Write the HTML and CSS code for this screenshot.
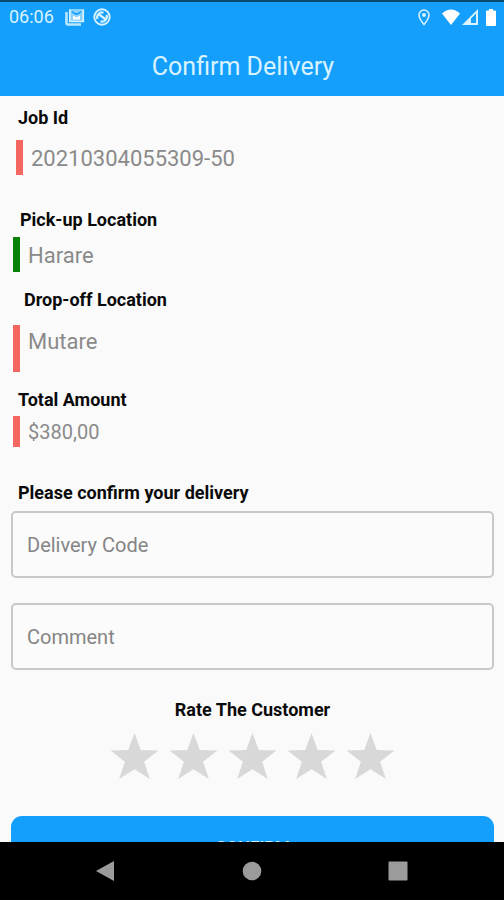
FILE: index.html
```html
<!DOCTYPE html>
<html lang="en">
<head>
<meta charset="utf-8">
<meta name="viewport" content="width=device-width, initial-scale=1">
<title>Confirm Delivery</title>
<link rel="stylesheet" href="styles.css">
</head>
<body>
<header class="header">
  <div class="status">
    <time class="clock">06:06</time>
    <svg class="icon icon-news" viewBox="0 0 20 18" aria-hidden="true">
      <path d="M1.500 4v11q0 1.500 1.500 1.500H16" fill="none" stroke="currentColor" stroke-width="2.600" opacity=".85"/>
      <rect x="4" y="1" width="15" height="13" rx="1" fill="currentColor" opacity=".6"/>
      <path d="M4.800 1.500v12h13.500v-12" fill="none" stroke="currentColor" stroke-width="1.600"/>
      <path d="M7 3.500q4.500 5 9 0" fill="none" stroke="#159ffc" stroke-width="1.800"/>
      <path d="M8 7.500l3.500 2 3.500-2v4H8z" fill="#fff"/>
    </svg>
    <svg class="icon icon-sync" viewBox="0 0 18 18" aria-hidden="true">
      <circle cx="9" cy="9" r="7.700" fill="none" stroke="currentColor" stroke-width="1.900"/>
      <path d="M4.500 11a4.800 4.800 0 0 1 6-6.300M13.500 7a4.800 4.800 0 0 1-6 6.300M6 6.500l7 5" fill="none" stroke="currentColor" stroke-width="2.200"/>
    </svg>
    <span class="spacer"></span>
    <svg class="icon icon-pin" viewBox="0 0 12 17" aria-hidden="true">
      <path d="M6 1a5 5 0 0 0-5 5c0 3.500 5 9.500 5 9.500S11 9.500 11 6a5 5 0 0 0-5-5z" fill="none" stroke="currentColor" stroke-width="1.500"/>
      <circle cx="6" cy="6" r="2" fill="currentColor"/>
    </svg>
    <svg class="icon icon-wifi" viewBox="0 0 18 16" aria-hidden="true">
      <path d="M0 4.500Q9-3.500 18 4.500L9 16z" fill="currentColor"/>
    </svg>
    <svg class="icon icon-signal" viewBox="0 0 16 16" aria-hidden="true">
      <path fill-rule="evenodd" d="M0 16L16 0v16zM9 9.500V14h5V4.500z" fill="currentColor"/>
    </svg>
    <svg class="icon icon-battery" viewBox="0 0 10 17" aria-hidden="true">
      <path d="M3 0h4v1.500h2q1 0 1 1V16q0 1-1 1H1q-1 0-1-1V2.500q0-1 1-1h2z" fill="currentColor"/>
    </svg>
  </div>
  <h1 class="title">Confirm Delivery</h1>
</header>
<main class="content">
  <section class="field field-job">
    <h2 class="label">Job Id</h2>
    <p class="value">20210304055309-50</p>
  </section>
  <section class="field field-pickup">
    <h2 class="label">Pick-up Location</h2>
    <p class="value">Harare</p>
  </section>
  <section class="field field-dropoff">
    <h2 class="label">Drop-off Location</h2>
    <p class="value">Mutare</p>
  </section>
  <section class="field field-total">
    <h2 class="label">Total Amount</h2>
    <p class="value">$380,00</p>
  </section>
  <form class="form">
    <label class="label form-label" for="code">Please confirm your delivery</label>
    <input class="input" id="code" type="text" placeholder="Delivery Code">
    <input class="input" id="comment" type="text" placeholder="Comment" aria-label="Comment">
    <fieldset class="rating">
      <legend class="label rating-label">Rate The Customer</legend>
      <div class="stars">
        <input class="star" type="radio" name="rating" value="1" aria-label="1 star">
        <input class="star" type="radio" name="rating" value="2" aria-label="2 stars">
        <input class="star" type="radio" name="rating" value="3" aria-label="3 stars">
        <input class="star" type="radio" name="rating" value="4" aria-label="4 stars">
        <input class="star" type="radio" name="rating" value="5" aria-label="5 stars">
      </div>
    </fieldset>
    <button class="confirm" type="submit">CONFIRM</button>
  </form>
</main>
<nav class="navbar" aria-label="System">
  <button class="nav-button" type="button" aria-label="Back">
    <svg class="nav-icon" viewBox="0 0 20 20"><path d="M0 10L18 0v20z"/></svg>
  </button>
  <button class="nav-button" type="button" aria-label="Home">
    <svg class="nav-icon" viewBox="0 0 20 20"><circle cx="10" cy="10" r="9.300"/></svg>
  </button>
  <button class="nav-button" type="button" aria-label="Recent apps">
    <svg class="nav-icon" viewBox="0 0 20 20"><rect x=".5" y=".5" width="19" height="19" rx="1"/></svg>
  </button>
</nav>
</body>
</html>
```
FILE: styles.css
```css
* {
  box-sizing: border-box;
}

body {
  margin: 0;
  height: 100vh;
  display: flex;
  flex-direction: column;
  background: #fafafa;
  color: #0a0a0a;
  font-family: Roboto, "Liberation Sans", sans-serif;
}

.header {
  flex: none;
  background: #159ffc;
  color: #d8f3ff;
  border-top: 2px solid #084a68;
}

.status {
  display: flex;
  align-items: center;
  height: 30px;
  padding: 0 8px 0 9px;
}

.clock {
  font-size: 18px;
  line-height: 30px;
  margin-right: 11px;
}

.icon {
  flex: none;
  display: block;
}

.icon-news {
  width: 20px;
  height: 18px;
  margin-right: 8px;
}

.icon-sync {
  width: 18px;
  height: 18px;
}

.spacer {
  flex: 1;
}

.icon-pin {
  width: 12px;
  height: 17px;
  margin-right: 12px;
}

.icon-wifi {
  width: 18px;
  height: 16px;
  margin-right: 2px;
  color: #fff;
}

.icon-signal {
  width: 16px;
  height: 16px;
  margin-right: 8px;
}

.icon-battery {
  width: 10px;
  height: 17px;
  color: #fff;
}

.title {
  margin: 0;
  padding: 19px 18px 13px 0;
  font-size: 25px;
  font-weight: 400;
  line-height: 32px;
  text-align: center;
}

.content {
  flex: 1;
  min-height: 0;
  overflow: hidden;
  padding: 10px 10px 0 11px;
}

.label {
  display: block;
  margin: 0;
  padding: 0 0 0 7px;
  font-size: 18px;
  font-weight: 700;
  line-height: 24px;
}

.value {
  margin: 0 0 0 2px;
  padding: 2px 0 0 8px;
  border-left: 7px solid #f4665f;
  color: #8a8a8a;
  font-size: 22px;
  line-height: 33px;
}

.field {
  display: flex;
  flex-direction: column;
}

.field-job {
  gap: 10px;
  margin-bottom: 33px;
}

.field-job .value {
  margin-left: 5px;
}

.field-pickup {
  gap: 5px;
  margin-bottom: 16px;
}

.field-pickup .label {
  padding-left: 9px;
}

.field-pickup .value {
  border-color: #078207;
}

.field-dropoff {
  gap: 13px;
  margin-bottom: 16px;
}

.field-dropoff .label {
  padding-left: 13px;
}

.field-dropoff .value {
  padding-top: 0;
  padding-bottom: 14px;
}

.field-total {
  gap: 4px;
  margin-bottom: 34px;
}

.field-total .value {
  font-size: 20px;
  line-height: 29px;
}

.form-label {
  margin-bottom: 6px;
}

.input {
  display: block;
  width: 100%;
  height: 67px;
  margin: 0 0 25px;
  padding: 0 14px;
  border: 2px solid #c8c8c8;
  border-radius: 5px;
  background: #fbfbfb;
  color: #222;
  font-family: inherit;
  font-size: 20px;
}

.input::placeholder {
  color: #858585;
  opacity: 1;
}

.rating {
  margin: 28px 0 36px;
  padding: 0;
  border: 0;
  text-align: center;
}

.rating-label {
  width: 100%;
  padding: 0;
  margin-bottom: 11px;
}

.stars {
  display: flex;
  justify-content: center;
  gap: 11px;
}

.star {
  appearance: none;
  width: 48px;
  height: 47px;
  margin: 0;
  background: #d8d8d8;
  clip-path: polygon(50% 0, 63% 36%, 100% 37%, 70% 61%, 82% 98%, 50% 77%, 18% 98%, 30% 61%, 0 37%, 37% 36%);
}

.star:checked {
  background: #159ffc;
}

.confirm {
  display: block;
  width: 100%;
  height: 62px;
  padding: 0;
  border: 0;
  border-radius: 11px;
  background: #159ffc;
  color: #d8f3ff;
  font-family: inherit;
  font-size: 17px;
  font-weight: 500;
}

.navbar {
  flex: none;
  display: flex;
  justify-content: center;
  height: 58px;
  background: #000;
}

.nav-button {
  width: 29%;
  padding: 0;
  border: 0;
  background: none;
}

.nav-icon {
  display: block;
  width: 20px;
  height: 20px;
  margin: 0 auto;
  fill: #9b9b9b;
}
```
